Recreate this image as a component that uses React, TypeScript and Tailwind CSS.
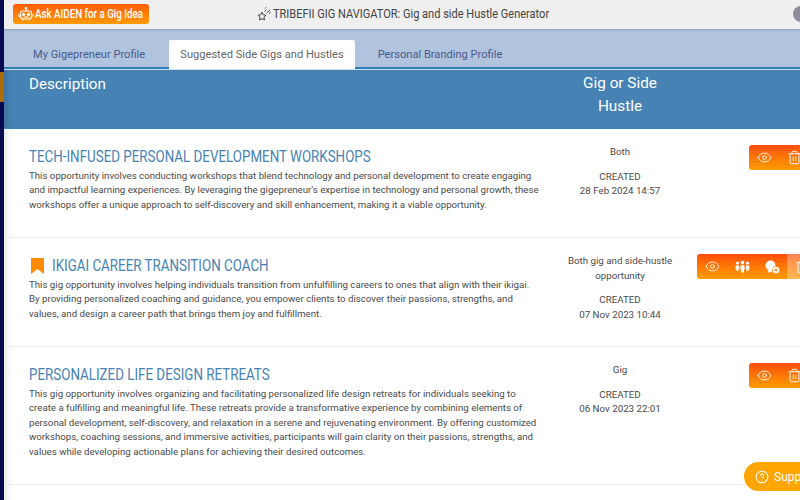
import { Eye, Trash2, CircleHelp } from "lucide-react";

const Robot = () => (
  <svg width="16" height="14" viewBox="0 0 16 14" fill="none" stroke="#fff" strokeWidth="1.1" className="shrink-0">
    <rect x="2.5" y="4" width="11" height="8" rx="2.5" />
    <path d="M8 4V1.5M1 7v3M15 7v3M5 12v1.2M11 12v1.2" />
    <circle cx="8" cy="1.2" r=".8" fill="#fff" />
    <circle cx="5.6" cy="7.4" r="1" fill="#fff" />
    <circle cx="10.4" cy="7.4" r="1" fill="#fff" />
    <path d="M5.5 10h5" />
  </svg>
);

const Star = () => (
  <svg width="16" height="16" viewBox="0 0 16 16" fill="none" stroke="#444" strokeWidth="1" className="shrink-0">
    <path d="M6 6.2l1.2 2.6 2.8.4-2 2 .5 2.8L6 12.7l-2.5 1.3.5-2.8-2-2 2.8-.4z" />
    <path d="M8.5 5.5l2-2M10.5 7l3.5-3M9 2.5l1-1.2M13 7.5l1.5-1" />
  </svg>
);

const People = () => (
  <svg width="15" height="13" viewBox="0 0 15 13" fill="#fff">
    <circle cx="2.5" cy="3" r="1.6" />
    <circle cx="7.5" cy="2.6" r="1.8" />
    <circle cx="12.5" cy="3" r="1.6" />
    <path d="M.8 5.4h3.2l.4 3.4H3.6V11H1.4V8.8H.4zM5.7 5.2h3.6l.5 4H9v3.2H6V9.2H5.2zM11 5.4h3.2l.4 3.4h-1V11h-2.2V8.8h-.8z" />
  </svg>
);

const Badge = () => (
  <svg width="15" height="14" viewBox="0 0 15 14" fill="#fff">
    <circle cx="5.5" cy="5.5" r="5" />
    <circle cx="11" cy="10" r="3.6" stroke="#ff8a00" strokeWidth=".6" />
    <circle cx="11" cy="10" r="1.3" fill="#ff8a00" />
    <path d="M3.5 9.5l-1 3.5 2.8-1.4L7 13l.3-3z" />
  </svg>
);

const Mark = () => (
  <svg width="13" height="16" viewBox="0 0 13 16" fill="#ff8c00" className="mr-[8px] ml-[2px] shrink-0">
    <path d="M0 0h13v16L6.5 11 0 16z" />
  </svg>
);

const items = [
  {
    title: "TECH-INFUSED PERSONAL DEVELOPMENT WORKSHOPS",
    lines: [
      "This opportunity involves conducting workshops that blend technology and personal development to create engaging",
      "and impactful learning experiences. By leveraging the gigepreneur's expertise in technology and personal growth, these",
      "workshops offer a unique approach to self-discovery and skill enhancement, making it a viable opportunity.",
    ],
    type: ["Both"],
    date: "28 Feb 2024 14:57",
    h: "h-[109px]",
    wide: false,
    mark: false,
  },
  {
    title: "IKIGAI CAREER TRANSITION COACH",
    lines: [
      "This gig opportunity involves helping individuals transition from unfulfilling careers to ones that align with their ikigai.",
      "By providing personalized coaching and guidance, you empower clients to discover their passions, strengths, and",
      "values, and design a career path that brings them joy and fulfillment.",
    ],
    type: ["Both gig and side-hustle", "opportunity"],
    date: "07 Nov 2023 10:44",
    h: "h-[109px]",
    wide: true,
    mark: true,
  },
  {
    title: "PERSONALIZED LIFE DESIGN RETREATS",
    lines: [
      "This gig opportunity involves organizing and facilitating personalized life design retreats for individuals seeking to",
      "create a fulfilling and meaningful life. These retreats provide a transformative experience by combining elements of",
      "personal development, self-discovery, and relaxation in a serene and rejuvenating environment. By offering customized",
      "workshops, coaching sessions, and immersive activities, participants will gain clarity on their passions, strengths, and",
      "values while developing actionable plans for achieving their desired outcomes.",
    ],
    type: ["Gig"],
    date: "06 Nov 2023 22:01",
    h: "h-[138px]",
    wide: false,
    mark: false,
  },
];

export default function App() {
  return (
    <div className="relative flex h-[500px] w-[800px] overflow-hidden bg-white font-['Roboto',sans-serif]">
      <div className="flex w-[4px] shrink-0 flex-col bg-[#070a4e]">
        <div className="mt-[72px] h-[30px] bg-[#a86c08]" />
      </div>
      <div className="flex min-w-0 flex-1 flex-col">
        <header className="relative flex h-[29px] shrink-0 items-center bg-[#efefef] pb-[2px] shadow-[0_1px_2px_rgba(0,0,0,0.2)]">
          <button className="ml-[9px] flex h-[20px] w-[136px] items-center gap-[1px] rounded-[3px] bg-gradient-to-b from-[#ff5a0a] to-[#ff9a00] pl-[5px] text-[12px] font-medium whitespace-nowrap text-white">
            <Robot />
            <span className="inline-block origin-left scale-x-[0.815]">Ask AIDEN for a Gig Idea</span>
          </button>
          <div className="ml-[107px] flex items-center gap-[1px] text-[13px] whitespace-nowrap text-[#444]">
            <Star />
            <span className="inline-block origin-left scale-x-[0.848]">TRIBEFII GIG NAVIGATOR: Gig and side Hustle Generator</span>
          </div>
          <div className="absolute top-[6px] right-[-9px] h-[16px] w-[16px] rounded-full bg-[#8d8d9c]" />
        </header>
        <nav className="flex h-[40px] shrink-0 items-end border-b-2 border-[#2f7db5] bg-[#b0c4de] pl-[12px] text-[11.1px]">
          <div className="flex h-[27px] w-[153px] items-center pt-[3px] pl-[17px] text-[#4a5a8c]">My Gigepreneur Profile</div>
          <div className="-mb-[2px] flex h-[29px] w-[186px] items-center justify-center rounded-t-[2px] bg-white pt-[1px] text-[#666]">Suggested Side Gigs and Hustles</div>
          <div className="flex h-[27px] w-[170px] items-center justify-center pt-[3px] text-[#4a5a8c]">Personal Branding Profile</div>
        </nav>
        <div className="flex h-[60px] shrink-0 border-t border-b border-t-[#cfe0ee] border-b-[#3a84bd] bg-[#4682b4] text-white shadow-[inset_6px_0_6px_-4px_rgba(0,0,0,0.15)]">
          <div className="w-[536px] pt-[2px] pl-[25px] text-[15.2px] leading-[24px]">Description</div>
          <div className="w-[160px] pt-[2px] text-center text-[15.3px] leading-[23px]">
            Gig or Side
            <br />
            Hustle
          </div>
        </div>
        <main className="flex-1 shadow-[inset_8px_0_8px_-6px_rgba(0,0,0,0.12)]">
          {items.map((it) => (
            <section key={it.title} className={`relative flex border-b border-[#eeeeee] ${it.h}`}>
              <div className="w-[536px] shrink-0 pt-[18px] pl-[25px]">
                <h2 className="flex h-[20px] items-center text-[16px] leading-[20px] whitespace-nowrap text-[#4682b4]">
                  {it.mark && <Mark />}
                  <span className="inline-block origin-left scale-x-[0.835]">{it.title}</span>
                </h2>
                <div className="mt-[1.5px] text-[9.7px] leading-[14.5px] whitespace-nowrap text-[#4a4a4a]">
                  {it.lines.map((l) => (
                    <div key={l}>{l}</div>
                  ))}
                </div>
              </div>
              <div className="w-[160px] shrink-0 pt-[16px] text-center text-[9.75px] leading-[14.5px] text-[#4a4a4a]">
                {it.type.map((l) => (
                  <div key={l}>{l}</div>
                ))}
                <div className="mt-[10px]">CREATED</div>
                <div>{it.date}</div>
              </div>
              {it.wide ? (
                <div className="absolute top-[16px] left-[693px] flex h-[25px] w-[120px] overflow-hidden rounded-l-[3px] bg-gradient-to-b from-[#ff4a0a] to-[#ff9c00] text-white">
                  <div className="flex w-[31px] items-center justify-center"><Eye size={15} strokeWidth={1.5} /></div>
                  <div className="flex w-[29px] items-center justify-center"><People /></div>
                  <div className="flex w-[30px] items-center justify-center"><Badge /></div>
                  <div className="flex flex-1 items-center bg-white/30 pl-[8px]"><Trash2 size={15} strokeWidth={1.5} /></div>
                </div>
              ) : (
                <div className="absolute top-[16px] left-[745px] flex h-[25px] w-[70px] items-center overflow-hidden rounded-l-[3px] bg-gradient-to-b from-[#ff4a0a] to-[#ff9c00] text-white">
                  <div className="flex w-[31px] items-center justify-center"><Eye size={15} strokeWidth={1.5} /></div>
                  <div className="flex w-[30px] items-center pl-[7px]"><Trash2 size={15} strokeWidth={1.5} /></div>
                </div>
              )}
            </section>
          ))}
        </main>
      </div>
      <div className="absolute top-[462px] left-[744px] flex h-[29px] w-[80px] items-center gap-[5px] rounded-full bg-[#ffa500] pl-[11px] text-[12px] text-white">
        <CircleHelp size={14} strokeWidth={1.8} />
        <span>Support</span>
      </div>
    </div>
  );
}
